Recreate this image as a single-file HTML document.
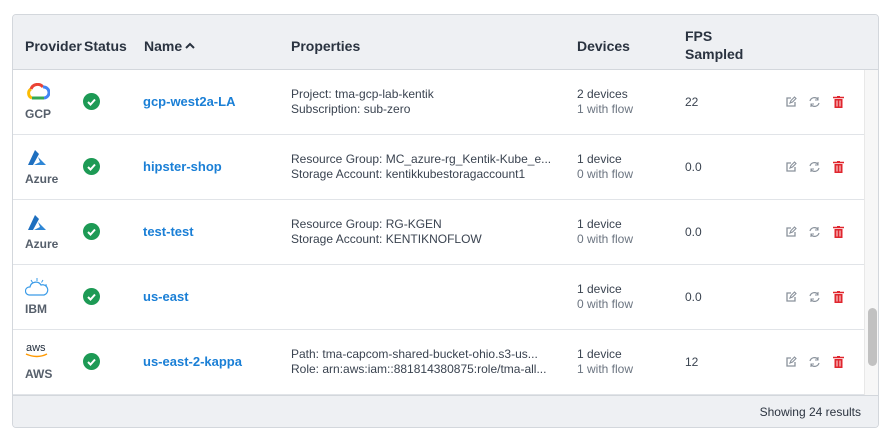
<!DOCTYPE html>
<html><head><style>
*{box-sizing:border-box;margin:0;padding:0}
body{width:896px;height:440px;background:#fff;font-family:"Liberation Sans",sans-serif;color:#2c3440;position:relative;overflow:hidden}
.box{position:absolute;left:12px;top:14px;width:867px;height:414px;border:1px solid #d3d7dc;border-radius:4px;overflow:hidden}
.hdr{position:absolute;left:0;top:0;width:865px;height:55px;background:#eef0f3;border-bottom:1px solid #d3d7dc}
.h{position:absolute;font-weight:bold;font-size:14px;color:#2a3340}
.row{position:absolute;left:0;width:851px;height:65px;border-bottom:1px solid #e1e4e8}
.t{position:absolute;font-size:12px;line-height:15px;color:#3a4350}
.sub{color:#6b7480}
.lnk{position:absolute;font-size:13px;font-weight:bold;color:#1a7fd6;top:24px;left:130px}
.plab{position:absolute;left:12px;top:37px;font-size:12px;font-weight:bold;color:#565f6b}
.chk{position:absolute;left:70px;top:23px;width:17px;height:17px;border-radius:50%;background:#1d9a55}
.ft{position:absolute;left:0;top:380px;width:865px;height:33px;background:#eef0f3;border-top:1px solid #d3d7dc}
.sb{position:absolute;left:851px;top:55px;width:14px;height:325px;background:#f7f7f7;border-left:1px solid #e8e8e8}
.th{position:absolute;left:3px;top:238px;width:9px;height:58px;background:#c1c1c1;border-radius:5px}
</style></head><body>
<div class="box">
<div class="hdr">
<div class="h" style="left:12px;top:23px">Provider</div>
<div class="h" style="left:71px;top:23px">Status</div>
<div class="h" style="left:131px;top:23px">Name<svg width="12" height="10" viewBox="0 0 12 10" style="margin-left:2px"><path d="M2 7 L6 3 L10 7" stroke="#2a3340" stroke-width="2" fill="none"/></svg></div>
<div class="h" style="left:278px;top:23px">Properties</div>
<div class="h" style="left:564px;top:23px">Devices</div>
<div class="h" style="left:672px;top:12px;line-height:18px">FPS<br>Sampled</div>
</div>

<div class="row" style="top:55px">
<svg style="position:absolute;left:13px;top:13px" width="24" height="18" viewBox="0 0 24 18"><path d="M6 15 A5 5 0 0 1 5 6" stroke="#fbbc04" stroke-width="3" fill="none"/><path d="M5 6 A7 7 0 0 1 17 4" stroke="#ea4335" stroke-width="3" fill="none"/><path d="M17 4 A5.5 5.5 0 0 1 18 15" stroke="#4285f4" stroke-width="3" fill="none"/><path d="M6 15 H18" stroke="#34a853" stroke-width="3"/></svg>
<div class="plab">GCP</div>
<div class="chk"><svg width="17" height="17"><path d="M5 9 L7.5 11.5 L12 6.5" stroke="#fff" stroke-width="2" fill="none"/></svg></div>
<div class="lnk">gcp-west2a-LA</div>
<div class="t" style="left:278px;top:17px">Project: tma-gcp-lab-kentik<br>Subscription: sub-zero</div>
<div class="t" style="left:564px;top:17px">2 devices<br><span class="sub">1 with flow</span></div>
<div class="t" style="left:672px;top:25px">22</div>
</div>
<div class="row" style="top:120px">
<svg style="position:absolute;left:13px;top:14px" width="22" height="18" viewBox="0 0 22 18"><path d="M9 1 L2 16 H7 L13 5Z" fill="#1e6fbf"/><path d="M12 8 L20 16 H8 L14 13Z" fill="#2f87d6"/></svg>
<div class="plab">Azure</div>
<div class="chk"><svg width="17" height="17"><path d="M5 9 L7.5 11.5 L12 6.5" stroke="#fff" stroke-width="2" fill="none"/></svg></div>
<div class="lnk">hipster-shop</div>
<div class="t" style="left:278px;top:17px">Resource Group: MC_azure-rg_Kentik-Kube_e...<br>Storage Account: kentikkubestoragaccount1</div>
<div class="t" style="left:564px;top:17px">1 device<br><span class="sub">0 with flow</span></div>
<div class="t" style="left:672px;top:25px">0.0</div>
</div>
<div class="row" style="top:185px">
<svg style="position:absolute;left:13px;top:14px" width="22" height="18" viewBox="0 0 22 18"><path d="M9 1 L2 16 H7 L13 5Z" fill="#1e6fbf"/><path d="M12 8 L20 16 H8 L14 13Z" fill="#2f87d6"/></svg>
<div class="plab">Azure</div>
<div class="chk"><svg width="17" height="17"><path d="M5 9 L7.5 11.5 L12 6.5" stroke="#fff" stroke-width="2" fill="none"/></svg></div>
<div class="lnk">test-test</div>
<div class="t" style="left:278px;top:17px">Resource Group: RG-KGEN<br>Storage Account: KENTIKNOFLOW</div>
<div class="t" style="left:564px;top:17px">1 device<br><span class="sub">0 with flow</span></div>
<div class="t" style="left:672px;top:25px">0.0</div>
</div>
<div class="row" style="top:250px">
<svg style="position:absolute;left:12px;top:12px" width="24" height="20" viewBox="0 0 24 20"><path d="M4 18 A4 4 0 0 1 5 10 A6 6 0 0 1 16 8 A4.5 4.5 0 0 1 19 18Z" stroke="#3a9be8" stroke-width="1.2" fill="none"/><path d="M12 1v3M6 3l1.5 2.5M18 3l-1.5 2.5M22 8h-2" stroke="#3a9be8" stroke-width="1"/></svg>
<div class="plab">IBM</div>
<div class="chk"><svg width="17" height="17"><path d="M5 9 L7.5 11.5 L12 6.5" stroke="#fff" stroke-width="2" fill="none"/></svg></div>
<div class="lnk">us-east</div>
<div class="t" style="left:564px;top:17px">1 device<br><span class="sub">0 with flow</span></div>
<div class="t" style="left:672px;top:25px">0.0</div>
</div>
<div class="row" style="top:315px">
<div style="position:absolute;left:13px;top:13px;font-size:11px;color:#232f3e;line-height:10px">aws</div>
<svg style="position:absolute;left:12px;top:23px" width="24" height="6"><path d="M1 1 Q12 6 22 1" stroke="#f90" stroke-width="1.5" fill="none"/></svg>
<div class="plab">AWS</div>
<div class="chk"><svg width="17" height="17"><path d="M5 9 L7.5 11.5 L12 6.5" stroke="#fff" stroke-width="2" fill="none"/></svg></div>
<div class="lnk">us-east-2-kappa</div>
<div class="t" style="left:278px;top:17px">Path: tma-capcom-shared-bucket-ohio.s3-us...<br>Role: arn:aws:iam::881814380875:role/tma-all...</div>
<div class="t" style="left:564px;top:17px">1 device<br><span class="sub">1 with flow</span></div>
<div class="t" style="left:672px;top:25px">12</div>
</div>

<div class="sb"><div class="th"></div></div>
<div class="ft"><div style="position:absolute;right:17px;top:9px;font-size:12px;color:#2c3440">Showing 24 results</div></div>
</div>
<div id="icons"></div>
<script>
var tops=[96,161,226,291,356],h='';
tops.forEach(function(t){
h+='<svg style="position:absolute;left:785px;top:'+t+'px" width="12" height="12" viewBox="0 0 12 12"><path d="M6 2H2v8h8V6" stroke="#8a929c" stroke-width="1.3" fill="none"/><path d="M5 7l1-2.5L9.5 1 11 2.5 7.5 6Z" stroke="#8a929c" stroke-width="1.1" fill="none"/></svg>';
h+='<svg style="position:absolute;left:808px;top:'+t+'px" width="13" height="12" viewBox="0 0 13 12"><path d="M2 5A4.5 4.5 0 0 1 10 3.5M11 7A4.5 4.5 0 0 1 3 8.5" stroke="#8a929c" stroke-width="1.2" fill="none"/><path d="M10 1v3H7M3 11V8h3" stroke="#8a929c" stroke-width="1.1" fill="none"/></svg>';
h+='<svg style="position:absolute;left:833px;top:'+t+'px" width="11" height="12" viewBox="0 0 11 12"><path d="M0 1.5h11M4 0h3" stroke="#e0262e" stroke-width="1.6"/><path d="M1.5 3h8v9h-8Z" fill="#e0262e"/><path d="M4 4.5v6M7 4.5v6" stroke="#fff" stroke-width="0.9"/></svg>';
});
document.getElementById('icons').innerHTML=h;
</script>
</body></html>
